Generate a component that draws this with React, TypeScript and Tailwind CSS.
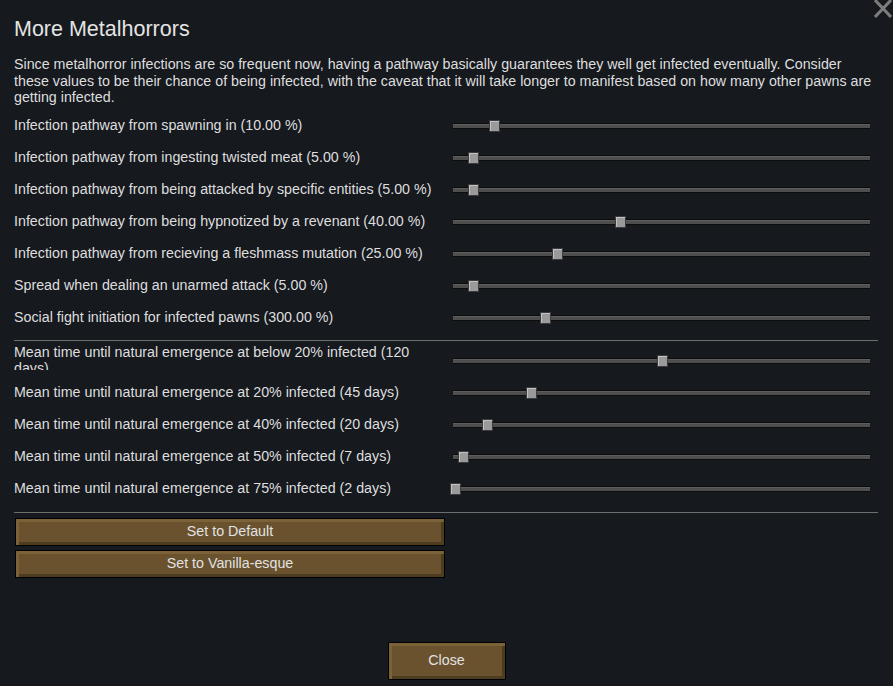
import React from "react"

type Setting = {
  label: string
  thumb: number // thumb offset in px along the track
  clipped?: boolean
}

const pathways: Setting[] = [
  { label: "Infection pathway from spawning in (10.00 %)", thumb: 36 },
  { label: "Infection pathway from ingesting twisted meat (5.00 %)", thumb: 15 },
  { label: "Infection pathway from being attacked by specific entities (5.00 %)", thumb: 15 },
  { label: "Infection pathway from being hypnotized by a revenant (40.00 %)", thumb: 162 },
  { label: "Infection pathway from recieving a fleshmass mutation (25.00 %)", thumb: 99 },
  { label: "Spread when dealing an unarmed attack (5.00 %)", thumb: 15 },
  { label: "Social fight initiation for infected pawns (300.00 %)", thumb: 87 },
]

const emergence: Setting[] = [
  { label: "Mean time until natural emergence at below 20% infected (120 days)", thumb: 204, clipped: true },
  { label: "Mean time until natural emergence at 20% infected (45 days)", thumb: 73 },
  { label: "Mean time until natural emergence at 40% infected (20 days)", thumb: 29 },
  { label: "Mean time until natural emergence at 50% infected (7 days)", thumb: 5 },
  { label: "Mean time until natural emergence at 75% infected (2 days)", thumb: -3 },
]

function Slider({ thumb }: { thumb: number }) {
  return (
    <div className="relative mt-[2px] h-[6px] w-[417px] border-y border-[#0c0c0c] bg-[#4e4e4e] shadow-[inset_0_1px_0_#5e5e5e]">
      <div
        className="absolute top-1/2 h-[12px] w-[11px] -translate-y-1/2 border border-[#3c3c3c] bg-[#9a9a9a] shadow-[inset_1px_1px_0_#c2c2c2]"
        style={{ left: thumb }}
      />
    </div>
  )
}

function SettingRow({ item }: { item: Setting }) {
  return (
    <div className="flex h-8 items-center">
      {item.clipped ? (
        <div className="h-[26px] w-[439px] self-start overflow-hidden pr-8 leading-4">{item.label}</div>
      ) : (
        <div className="w-[439px] leading-4">{item.label}</div>
      )}
      <Slider thumb={item.thumb} />
    </div>
  )
}

function BrownButton({ children, className }: { children: React.ReactNode; className: string }) {
  return (
    <button
      className={
        "flex items-center justify-center border border-black bg-[#6a522f] text-[14.25px] text-[#e2e2e2] shadow-[inset_3px_3px_0_#7c6238,inset_-3px_-3px_0_#4e3c21] " +
        className
      }
    >
      {children}
    </button>
  )
}

export default function App() {
  return (
    <div
      className="relative h-[686px] w-[893px] overflow-hidden bg-[#16191e] pl-[14px] pr-[15px] text-[14.25px] text-[#dedede]"
      style={{ fontFamily: '"Liberation Sans", Arial, sans-serif' }}
    >
      {/* close cross in the corner */}
      <svg className="absolute right-[1px] top-0 h-[18px] w-[18px]" viewBox="0 0 18 18">
        <path d="M1 0 L17 17 M17 0 L1 17" stroke="#7c7c7c" strokeWidth="3" />
      </svg>

      <h1 className="mt-[15px] text-[21.5px] leading-7 text-[#e4e4e4]">More Metalhorrors</h1>

      <p className="mt-[13px] leading-[16.5px]">
        Since metalhorror infections are so frequent now, having a pathway basically guarantees they well get
        infected eventually. Consider these values to be their chance of being infected, with the caveat that it
        will take longer to manifest based on how many other pawns are getting infected.
      </p>

      <div className="mt-[3px]">
        {pathways.map((p) => (
          <SettingRow key={p.label} item={p} />
        ))}
      </div>

      <div className="mt-[7px] h-px bg-[#6e6e6e]" />

      <div className="mt-[3px]">
        {emergence.map((p) => (
          <SettingRow key={p.label} item={p} />
        ))}
      </div>

      <div className="mt-[8px] h-px bg-[#6e6e6e]" />

      <div className="mt-[5px] flex flex-col gap-[4px] pl-px">
        <BrownButton className="h-[28px] w-[430px]">Set to Default</BrownButton>
        <BrownButton className="h-[28px] w-[430px]">Set to Vanilla-esque</BrownButton>
      </div>

      <div className="mt-[64px] flex justify-center pr-[1px]">
        <BrownButton className="ml-[2px] h-[38px] w-[118px]">Close</BrownButton>
      </div>
    </div>
  )
}
